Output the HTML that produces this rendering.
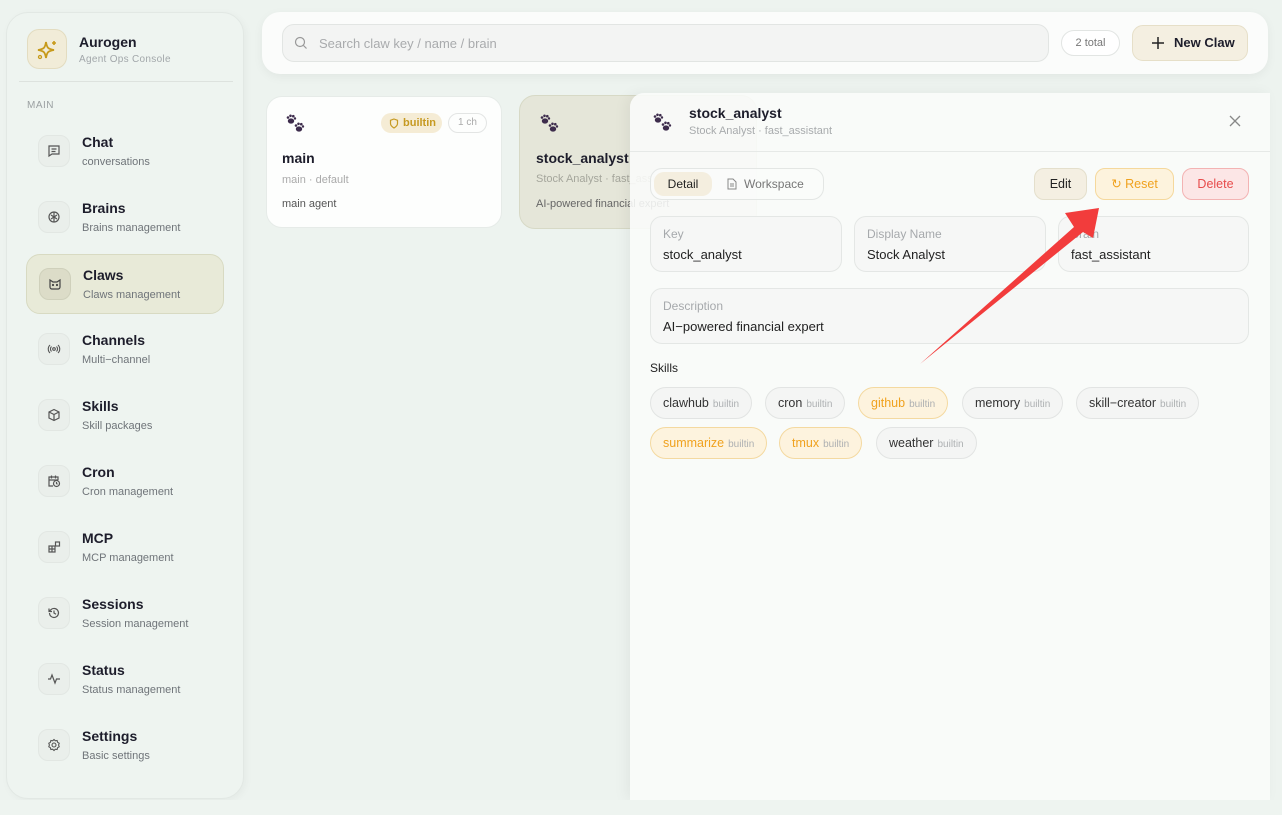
<!DOCTYPE html>
<html><head><meta charset="utf-8"><style>
*{box-sizing:border-box;margin:0;padding:0}
body{width:1282px;height:815px;background:#edf3ef;font-family:"Liberation Sans",sans-serif;position:relative;overflow:hidden;color:#1d1d2b}
.abs{position:absolute}
.sidebar{left:6px;top:12px;width:238px;height:787px;background:#eef4f0;border:1px solid #e2e8e4;border-radius:22px;box-shadow:2px 2px 8px rgba(0,0,0,.04)}
.logo{left:20px;top:16px;width:40px;height:40px;border-radius:12px;background:#f1ecd8;border:1px solid #e3dcc0}
.navi{left:20px;width:198px;height:60px;border-radius:14px}
.navi.act{background:#e8ead8;border:1px solid #d8dac2}
.ib{position:absolute;left:12px;top:13px;width:32px;height:32px;border-radius:10px;background:#eaefeb;border:1px solid #e2e7e3;display:flex;align-items:center;justify-content:center}
.act .ib{background:#dcdcc8;border-color:#cfd0bb}
.nt{position:absolute;left:56px;top:12px;font-size:14px;font-weight:bold;color:#1d1d2b}
.ns{position:absolute;left:56px;top:34px;font-size:11px;color:#6f7479}
.top{left:262px;top:12px;width:1006px;height:62px;background:#fbfcfb;border-radius:18px;box-shadow:0 3px 10px rgba(0,0,0,.05)}
.card{background:#fdfefd;border:1px solid #e6ebe8;border-radius:16px}
.panel{left:630px;top:93px;width:640px;height:707px;background:rgba(251,252,251,.88);border-radius:14px 0 0 0;box-shadow:-4px 0 14px rgba(0,0,0,.05)}
.fld{position:absolute;background:#f6f7f6;border:1px solid #e4e7e5;border-radius:12px}
.fl{position:absolute;left:12px;top:10px;font-size:12px;color:#a6a9ac}
.fv{position:absolute;left:12px;top:30px;font-size:13px;color:#222}
.chip{position:absolute;height:32px;border-radius:16px;border:1px solid #e2e4e3;background:#f4f5f4;font-size:12.5px;color:#333;line-height:30px;padding:0 12px;white-space:nowrap}
.chip small{font-size:10px;color:#adb0b2;margin-left:4px}
.chip.o{background:#fdf3de;border-color:#f4d9a0;color:#f0a21f}
.btn{position:absolute;top:75px;height:32px;border-radius:10px;font-size:12.5px;line-height:30px;text-align:center}
</style></head><body>
<svg width="0" height="0" style="position:absolute"><defs><g id="paw" fill="#3d2c4c"><ellipse cx="5" cy="7" rx="3.2" ry="2.6"/><circle cx="2" cy="3.5" r="1.3"/><circle cx="4.5" cy="1.8" r="1.3"/><circle cx="7.3" cy="2.2" r="1.3"/><circle cx="9" cy="4.5" r="1.2"/><ellipse cx="13" cy="15" rx="3.2" ry="2.6"/><circle cx="10" cy="11.5" r="1.3"/><circle cx="12.5" cy="9.8" r="1.3"/><circle cx="15.3" cy="10.2" r="1.3"/><circle cx="17" cy="12.5" r="1.2"/></g></defs></svg>
<div class="abs sidebar">
 <div class="abs logo"><svg width="40" height="40" viewBox="0 0 40 40"><path d="M18 12 C19 18 20 19 26 20 C20 21 19 22 18 28 C17 22 16 21 10 20 C16 19 17 18 18 12Z" fill="none" stroke="#c79a1a" stroke-width="1.8"/><path d="M26 11v4M24 13h4" stroke="#c79a1a" stroke-width="1.6"/><circle cx="12" cy="27" r="1.5" fill="none" stroke="#c79a1a" stroke-width="1.3"/></svg></div>
 <div class="abs" style="left:72px;top:21px;font-size:14px;font-weight:bold">Aurogen</div>
 <div class="abs" style="left:72px;top:41px;font-size:10px;color:#a2a7aa;letter-spacing:.3px">Agent Ops Console</div>
 <div class="abs" style="left:12px;top:68px;width:214px;height:1px;background:#dde2de"></div>
 <div class="abs" style="left:20px;top:87px;font-size:10px;color:#9ba0a2;letter-spacing:.5px">MAIN</div>
</div>
<div class="abs navi" style="left:26px;top:122px"><div class="ib"><svg width="14" height="14" viewBox="0 0 14 14" fill="none" stroke="#555" stroke-width="1.2"><path d="M2 2h10v8H5l-3 2z"/><path d="M4.5 5h5M4.5 7.5h4"/></svg></div><div class="nt">Chat</div><div class="ns">conversations</div></div>
<div class="abs navi" style="left:26px;top:188px"><div class="ib"><svg width="14" height="14" viewBox="0 0 14 14" fill="none" stroke="#555" stroke-width="1.2"><circle cx="7" cy="7" r="5"/><path d="M7 2v10M4 5l3 2 3-2M4 9l3-2 3 2"/></svg></div><div class="nt">Brains</div><div class="ns">Brains management</div></div>
<div class="abs navi act" style="left:26px;top:254px"><div class="ib"><svg width="14" height="14" viewBox="0 0 14 14" fill="none" stroke="#444" stroke-width="1.2"><path d="M2 3l3 2h4l3-2v7a2 2 0 0 1-2 2H4a2 2 0 0 1-2-2z"/><circle cx="5" cy="8" r=".5" fill="#444"/><circle cx="9" cy="8" r=".5" fill="#444"/></svg></div><div class="nt">Claws</div><div class="ns">Claws management</div></div>
<div class="abs navi" style="left:26px;top:320px"><div class="ib"><svg width="14" height="14" viewBox="0 0 14 14" fill="none" stroke="#555" stroke-width="1.1"><circle cx="7" cy="7" r="1.3"/><path d="M4.5 4.5a3.5 3.5 0 0 0 0 5M9.5 4.5a3.5 3.5 0 0 1 0 5M3 3a5.5 5.5 0 0 0 0 8M11 3a5.5 5.5 0 0 1 0 8"/></svg></div><div class="nt">Channels</div><div class="ns">Multi−channel</div></div>
<div class="abs navi" style="left:26px;top:386px"><div class="ib"><svg width="14" height="14" viewBox="0 0 14 14" fill="none" stroke="#555" stroke-width="1.2"><path d="M7 1.5l5 2.5v6L7 12.5 2 10V4zM2 4l5 2.5L12 4M7 6.5v6"/></svg></div><div class="nt">Skills</div><div class="ns">Skill packages</div></div>
<div class="abs navi" style="left:26px;top:452px"><div class="ib"><svg width="14" height="14" viewBox="0 0 14 14" fill="none" stroke="#555" stroke-width="1.2"><path d="M6 12H2V3h9v3M2 6h9M4.5 1.5v3M8.5 1.5v3"/><circle cx="9.5" cy="9.5" r="3"/><path d="M9.5 8v1.5l1 .8"/></svg></div><div class="nt">Cron</div><div class="ns">Cron management</div></div>
<div class="abs navi" style="left:26px;top:518px"><div class="ib"><svg width="14" height="14" viewBox="0 0 14 14" fill="none" stroke="#555" stroke-width="1.2"><rect x="2" y="6" width="6" height="6"/><path d="M2 9h6M5 6v6"/><rect x="8.5" y="2" width="4" height="4"/></svg></div><div class="nt">MCP</div><div class="ns">MCP management</div></div>
<div class="abs navi" style="left:26px;top:584px"><div class="ib"><svg width="14" height="14" viewBox="0 0 14 14" fill="none" stroke="#555" stroke-width="1.2"><path d="M2.5 7a4.5 4.5 0 1 0 1.3-3.2L2 5.5M2 2.5v3h3"/><path d="M7 4.5V7l2 1.3"/></svg></div><div class="nt">Sessions</div><div class="ns">Session management</div></div>
<div class="abs navi" style="left:26px;top:650px"><div class="ib"><svg width="14" height="14" viewBox="0 0 14 14" fill="none" stroke="#555" stroke-width="1.2"><path d="M1 7h2.5L5 3l3 8 1.5-4H13"/></svg></div><div class="nt">Status</div><div class="ns">Status management</div></div>
<div class="abs navi" style="left:26px;top:716px"><div class="ib"><svg width="14" height="14" viewBox="0 0 14 14" fill="none" stroke="#555" stroke-width="1.1"><circle cx="7" cy="7" r="2"/><path d="M7 1.5l1.3 1.3 1.8-.3.5 1.8 1.6.9-.6 1.8.6 1.8-1.6.9-.5 1.8-1.8-.3L7 12.5l-1.3-1.3-1.8.3-.5-1.8-1.6-.9.6-1.8-.6-1.8 1.6-.9.5-1.8 1.8.3z"/></svg></div><div class="nt">Settings</div><div class="ns">Basic settings</div></div>

<div class="abs top">
 <div class="abs" style="left:20px;top:12px;width:767px;height:38px;background:#f3f4f3;border:1px solid #e2e5e3;border-radius:12px">
  <svg class="abs" style="left:11px;top:11px" width="14" height="14" viewBox="0 0 14 14" fill="none" stroke="#999" stroke-width="1.2"><circle cx="6" cy="6" r="4.5"/><path d="M9.5 9.5l3 3"/></svg>
  <div class="abs" style="left:36px;top:11px;font-size:13px;color:#a9abad">Search claw key / name / brain</div>
 </div>
 <div class="abs" style="left:799px;top:18px;width:59px;height:26px;border:1px solid #e2e5e3;border-radius:13px;background:#fff;font-size:11px;color:#777;text-align:center;line-height:24px">2 total</div>
 <div class="abs" style="left:870px;top:13px;width:116px;height:36px;border:1px solid #e6dfc8;border-radius:11px;background:#f4efe1;font-size:13px;font-weight:bold;line-height:34px"><svg class="abs" style="left:19px;top:11px" width="12" height="12" viewBox="0 0 12 12" stroke="#222" stroke-width="1.5"><path d="M6 0v12M0 6h12"/></svg><span style="position:absolute;left:41px">New Claw</span></div>
</div>

<div class="abs card" style="left:266px;top:96px;width:236px;height:132px">
 <svg class="abs" style="left:19px;top:17px" width="20" height="20" viewBox="0 0 20 20"><use href="#paw"/></svg>
 <div class="abs" style="left:114px;top:16px;width:61px;height:20px;border-radius:10px;background:#f5ecd5;font-size:11px;font-weight:bold;color:#c69a22;line-height:20px;padding-left:22px">builtin<svg class="abs" style="left:8px;top:5px" width="10" height="11" viewBox="0 0 10 11" fill="none" stroke="#c69a22" stroke-width="1.2"><path d="M5 1l3.5 1.3v3.2C8.5 8 5 10 5 10S1.5 8 1.5 5.5V2.3z"/></svg></div>
 <div class="abs" style="left:181px;top:16px;width:39px;height:20px;border-radius:10px;border:1px solid #e3e5e4;font-size:10px;color:#aaa;text-align:center;line-height:18px">1 ch</div>
 <div class="abs" style="left:15px;top:53px;font-size:14px;font-weight:bold">main</div>
 <div class="abs" style="left:15px;top:77px;font-size:11px;color:#aaa">main · default</div>
 <div class="abs" style="left:15px;top:101px;font-size:11px;color:#555">main agent</div>
</div>
<div class="abs" style="left:519px;top:95px;width:238px;height:134px;background:#e5e6d9;border:1px solid #d7d9c6;border-radius:16px">
 <svg class="abs" style="left:20px;top:18px" width="20" height="20" viewBox="0 0 20 20"><use href="#paw"/></svg>
 <div class="abs" style="left:16px;top:54px;font-size:14px;font-weight:bold">stock_analyst</div>
 <div class="abs" style="left:16px;top:77px;font-size:11px;color:#a5a69c;white-space:nowrap">Stock Analyst · fast_assistant</div>
 <div class="abs" style="left:16px;top:102px;font-size:11px;color:#666;white-space:nowrap">AI-powered financial expert</div>
</div>

<div class="abs panel">
 <svg class="abs" style="left:23px;top:20px" width="20" height="20" viewBox="0 0 20 20"><use href="#paw"/></svg>
 <div class="abs" style="left:59px;top:12px;font-size:14px;font-weight:bold;color:#1d1d2b">stock_analyst</div>
 <div class="abs" style="left:59px;top:32px;font-size:11px;color:#a8abad">Stock Analyst · fast_assistant</div>
 <svg class="abs" style="left:599px;top:22px" width="12" height="12" viewBox="0 0 12 12" stroke="#888" stroke-width="1.3"><path d="M1 1l10 10M11 1L1 11"/></svg>
 <div class="abs" style="left:0;top:58px;width:640px;height:1px;background:#e6e9e7"></div>
 <div class="abs" style="left:20px;top:75px;width:174px;height:32px;border:1px solid #e3e6e4;border-radius:12px;background:rgba(251,252,251,.7)">
  <div class="abs" style="left:3px;top:3px;width:58px;height:24px;border-radius:10px;background:#f4eedf;font-size:12px;text-align:center;line-height:24px;color:#222">Detail</div>
  <svg class="abs" style="left:76px;top:9px" width="10" height="12" viewBox="0 0 10 12" fill="none" stroke="#888" stroke-width="1"><path d="M1 1h5l3 3v7H1zM3 6h4M3 8h4"/></svg>
  <div class="abs" style="left:93px;top:8px;font-size:12px;color:#777">Workspace</div>
 </div>
 <div class="btn" style="left:404px;width:53px;background:#f4efe2;border:1px solid #e4dfcc;color:#222">Edit</div>
 <div class="btn" style="left:465px;width:79px;background:#fdf3dd;border:1px solid #f5d89c;color:#f0a21f">↻ Reset</div>
 <div class="btn" style="left:552px;width:67px;background:#fce6e6;border:1px solid #f3b3b3;color:#e74b4b">Delete</div>
 <div class="fld" style="left:20px;top:123px;width:192px;height:56px"><div class="fl">Key</div><div class="fv">stock_analyst</div></div>
 <div class="fld" style="left:224px;top:123px;width:192px;height:56px"><div class="fl">Display Name</div><div class="fv">Stock Analyst</div></div>
 <div class="fld" style="left:428px;top:123px;width:191px;height:56px"><div class="fl">Brain</div><div class="fv">fast_assistant</div></div>
 <div class="fld" style="left:20px;top:195px;width:599px;height:56px"><div class="fl">Description</div><div class="fv">AI−powered financial expert</div></div>
 <div class="abs" style="left:20px;top:268px;font-size:12px;color:#222">Skills</div>
 <div class="chip" style="left:20px;top:294px">clawhub<small>builtin</small></div>
 <div class="chip" style="left:135px;top:294px">cron<small>builtin</small></div>
 <div class="chip o" style="left:228px;top:294px">github<small>builtin</small></div>
 <div class="chip" style="left:332px;top:294px">memory<small>builtin</small></div>
 <div class="chip" style="left:446px;top:294px">skill−creator<small>builtin</small></div>
 <div class="chip o" style="left:20px;top:334px">summarize<small>builtin</small></div>
 <div class="chip o" style="left:149px;top:334px">tmux<small>builtin</small></div>
 <div class="chip" style="left:246px;top:334px">weather<small>builtin</small></div>
</div>
<div class="abs" style="left:0;top:800px;width:1282px;height:15px;background:#eef4f0"></div>
<svg class="abs" style="left:0;top:0" width="1282" height="815"><polygon points="920,364 1074,227 1065,213 1099,208 1093,238 1083,232" fill="#f23c3c"/></svg>
</body></html>
